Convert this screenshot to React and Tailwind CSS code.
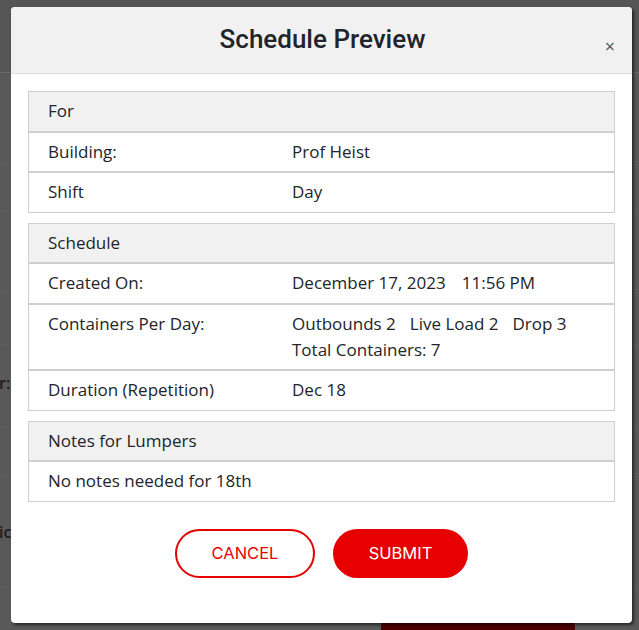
import React from 'react';

const body = { fontFamily: '"Open Sans", "Noto Sans", sans-serif' };

function Row({ label, children, head }) {
  return (
    <div
      className={`grid grid-cols-[244px_1fr] border border-[#cfcfcf] pl-[19px] py-[6.25px] text-[17px] leading-[26px] text-[#212529] ${head ? 'bg-[#f1f1f1]' : 'bg-white'}`}
    >
      <div>{label}</div>
      <div>{children}</div>
    </div>
  );
}

function Section({ children }) {
  return <div className="flex flex-col">{children}</div>;
}

export default function App() {
  return (
    <div className="relative w-[639px] h-[630px] overflow-hidden bg-[#595959]" style={body}>
      {/* page behind the overlay */}
      <div className="flex flex-col text-[#1c1c1c] font-semibold text-[16px]">
        <div className="h-[73px] border-b border-[#686868] bg-[#555]" />
        <div className="h-[92px] border-b border-[#5f5f5f]" />
        <div className="h-[46px] border-b border-[#5f5f5f]" />
        <div className="h-[82px] border-b border-[#5f5f5f]" />
        <div className="h-[52px] border-b border-[#5f5f5f]" />
        <div className="h-[82px] border-b border-[#5f5f5f] flex items-center">
          <span className="-ml-[1px] -mt-[6px]">r:</span>
        </div>
        <div className="h-[50px] border-b border-[#5f5f5f]" />
        <div className="h-[110px] border-b border-[#5f5f5f] flex items-center">
          <span className="-ml-[1px]">ic</span>
        </div>
        <div className="pl-[381px] pt-[16px]">
          <div className="w-[194px] h-[50px] rounded-full bg-[#4d0000]" />
        </div>
      </div>

      {/* modal */}
      <div className="absolute inset-0 pl-[11px] pt-[7px]">
        <div className="w-[621px] h-[616px] rounded-[4px] bg-white shadow-[2px_2px_3px_rgba(0,0,0,0.55)] overflow-hidden flex flex-col">
          <div className="grid grid-cols-[1fr_auto_1fr] h-[67px] items-center bg-[#f1f1f1] border-b border-[#dcdcdc]">
            <div />
            <h2
              className="text-[26px] font-medium text-[#212529] pb-[1px] pl-[2px]"
              style={{ fontFamily: 'Roboto, "Noto Sans", sans-serif' }}
            >
              Schedule Preview
            </h2>
            <div className="flex justify-end pr-[17px] pt-[12px]">
              <button className="text-[18px] leading-none text-[#555]">×</button>
            </div>
          </div>

          <div className="flex flex-col gap-[10px] px-[17px] pt-[17px]">
            <Section>
              <Row label="For" head />
              <Row label="Building:">Prof Heist</Row>
              <Row label="Shift">Day</Row>
            </Section>
            <Section>
              <Row label="Schedule" head />
              <Row label="Created On:">
                <span>December 17, 2023</span>
                <span className="ml-[16px]">11:56 PM</span>
              </Row>
              <Row label="Containers Per Day:">
                <div className="flex gap-x-[14px]">
                  <span>Outbounds 2</span>
                  <span>Live Load 2</span>
                  <span>Drop 3</span>
                </div>
                <div>Total Containers: 7</div>
              </Row>
              <Row label="Duration (Repetition)">Dec 18</Row>
            </Section>
            <Section>
              <Row label="Notes for Lumpers" head />
              <div className="border border-[#cfcfcf] pl-[19px] py-[6.25px] text-[17px] leading-[26px] text-[#212529]">
                No notes needed for 18th
              </div>
            </Section>
          </div>

          <div
            className="flex justify-center gap-[18px] mt-[27px]"
            style={{ fontFamily: 'Inter, "Noto Sans", sans-serif' }}
          >
            <button className="w-[140px] h-[49px] rounded-full border-2 border-[#e60000] text-[#e60000] text-[16.5px]">
              CANCEL
            </button>
            <button className="w-[135px] h-[49px] rounded-full bg-[#e60000] text-white text-[16.5px]">
              SUBMIT
            </button>
          </div>
        </div>
      </div>
    </div>
  );
}
